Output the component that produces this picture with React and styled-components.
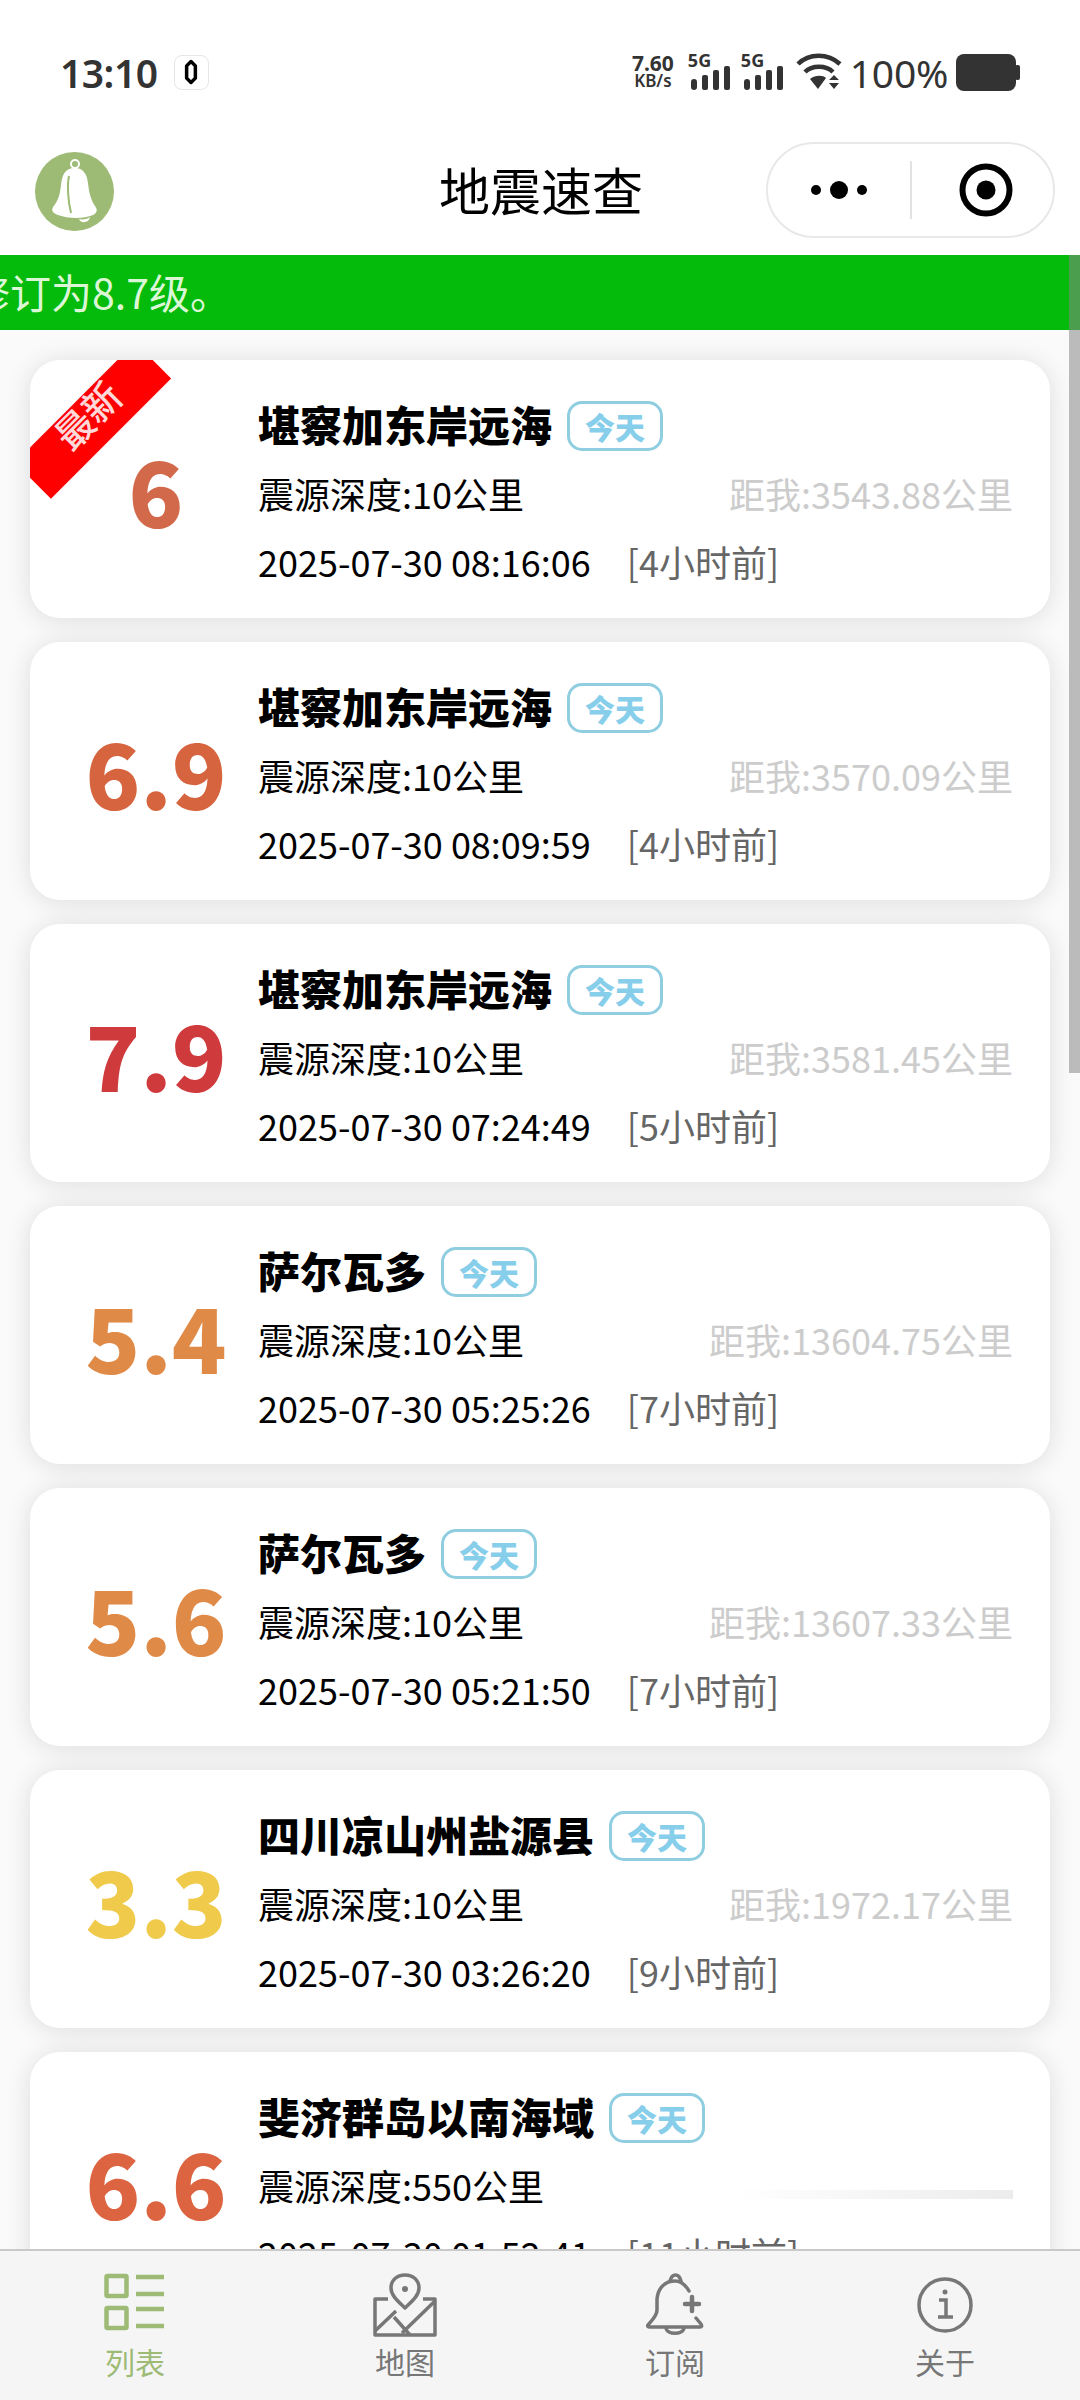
import React from 'react'
import styled, { createGlobalStyle } from 'styled-components'

const GlobalStyle = createGlobalStyle`
  html, body {
    margin: 0;
    padding: 0;
    background: #fff;
    font-family: "Noto Sans CJK SC", "Noto Sans", sans-serif;
  }
`

const quakes = [
  { mag: '6', color: '#d2694a', place: '堪察加东岸远海', depth: '10', dist: '3543.88', time: '2025-07-30 08:16:06', ago: '4', latest: true },
  { mag: '6.9', color: '#d6653f', place: '堪察加东岸远海', depth: '10', dist: '3570.09', time: '2025-07-30 08:09:59', ago: '4' },
  { mag: '7.9', color: '#cf3a3c', place: '堪察加东岸远海', depth: '10', dist: '3581.45', time: '2025-07-30 07:24:49', ago: '5' },
  { mag: '5.4', color: '#e08a48', place: '萨尔瓦多', depth: '10', dist: '13604.75', time: '2025-07-30 05:25:26', ago: '7' },
  { mag: '5.6', color: '#e08a48', place: '萨尔瓦多', depth: '10', dist: '13607.33', time: '2025-07-30 05:21:50', ago: '7' },
  { mag: '3.3', color: '#f0ca4b', place: '四川凉山州盐源县', depth: '10', dist: '1972.17', time: '2025-07-30 03:26:20', ago: '9' },
  { mag: '6.6', color: '#dc6440', place: '斐济群岛以南海域', depth: '550', time: '2025-07-30 01:52:41', ago: '11', fading: true },
]

const tabs = [
  { label: '列表', Icon: ListIcon, active: true },
  { label: '地图', Icon: MapIcon },
  { label: '订阅', Icon: BellPlusIcon },
  { label: '关于', Icon: InfoIcon },
]

const Page = styled.div`
  position: relative;
  width: 1080px;
  height: 2400px;
  display: flex;
  flex-direction: column;
  overflow: hidden;
  background: #fff;
`

const StatusBar = styled.div`
  height: 130px;
  flex: none;
  padding: 14px 60px 0 60px;
  box-sizing: border-box;
  display: flex;
  align-items: center;
  justify-content: space-between;
  color: #333;
`

const StatusLeft = styled.div`
  display: flex;
  align-items: center;
  gap: 16px;
`

const Clock = styled.span`
  font-family: "Noto Sans", sans-serif;
  font-size: 39px;
  font-weight: 600;
  letter-spacing: -0.5px;
`

const CapsuleBadge = styled.span`
  width: 35px;
  height: 35px;
  box-sizing: border-box;
  border: 1px solid #e6e6e6;
  border-radius: 8px;
  display: flex;
  align-items: center;
  justify-content: center;
`

const StatusRight = styled.div`
  display: flex;
  align-items: center;
`

const Speed = styled.div`
  width: 46px;
  margin-right: 14px;
  font-family: "Noto Sans", sans-serif;
  font-weight: 700;
  font-size: 21px;
  line-height: 18px;
  text-align: center;
  small {
    display: block;
    font-size: 17px;
    font-weight: 600;
  }
`

const Signal = styled.div`
  position: relative;
  width: 42px;
  height: 36px;
  margin-right: 11px;
  span {
    position: absolute;
    left: -2px;
    top: -3px;
    font-family: "Noto Sans", sans-serif;
    font-size: 18px;
    font-weight: 700;
    line-height: 18px;
  }
  svg {
    display: block;
  }
`

const Percent = styled.span`
  font-family: "Noto Sans", sans-serif;
  font-size: 39px;
  margin: 0 8px 0 8px;
  letter-spacing: -0.3px;
`

const NavBar = styled.div`
  height: 125px;
  flex: none;
  box-sizing: border-box;
  display: grid;
  grid-template-columns: 1fr auto 1fr;
  align-items: center;
  padding: 0 25px 5px 35px;
`

const Logo = styled.div`
  width: 79px;
  height: 79px;
  margin-top: 3px;
  border-radius: 50%;
  background: #9dbb75;
  display: flex;
  align-items: center;
  justify-content: center;
`

const NavTitle = styled.div`
  font-size: 51px;
  font-weight: 400;
  color: #000;
  margin: -2px 0 0 -8px;
`

const Capsule = styled.div`
  justify-self: end;
  width: 289px;
  height: 96px;
  box-sizing: border-box;
  border: 2px solid #e8e8e8;
  border-radius: 48px;
  display: grid;
  grid-template-columns: 1fr 2px 1fr;
  align-items: center;
`

const CapsuleSide = styled.div`
  height: 100%;
  box-sizing: border-box;
  padding-left: ${p => p.$inset || 0}px;
  display: flex;
  align-items: center;
  justify-content: center;
`

const CapsuleDivider = styled.div`
  height: 58px;
  background: #e2e2e2;
`

const Banner = styled.div`
  height: 75px;
  flex: none;
  background: #04ba0b;
  color: #dcf7d6;
  font-size: 41px;
  line-height: 72px;
  white-space: nowrap;
  overflow: hidden;
`

const BannerText = styled.span`
  display: inline-block;
  margin-left: -31px;
`

const List = styled.div`
  flex: 1;
  min-height: 0;
  overflow: hidden;
  background: #fafafa;
  padding: 30px 30px 0;
  display: flex;
  flex-direction: column;
  gap: 24px;
`

const Card = styled.div`
  position: relative;
  flex: none;
  height: 258px;
  background: #fff;
  border-radius: 30px;
  box-shadow: 0 2px 26px rgba(0, 0, 0, 0.12);
  overflow: hidden;
  display: flex;
`

const Ribbon = styled.div`
  position: absolute;
  left: -22px;
  top: 35px;
  width: 170px;
  height: 51px;
  background: #fe0000;
  color: #ffd9d9;
  font-size: 38px;
  font-weight: 500;
  line-height: 33px;
  text-align: center;
  transform: rotate(-45deg);
`

const Magnitude = styled.div`
  width: 192px;
  padding: 0 0 0 30px;
  flex: none;
  display: flex;
  align-items: center;
  justify-content: center;
  color: ${p => p.$color};
  font-size: 90px;
  font-weight: 900;
`

const Body = styled.div`
  flex: 1;
  min-width: 0;
  padding: 31px 37px 0 6px;
`

const Row = styled.div`
  height: 68px;
  display: flex;
  align-items: center;
  justify-content: ${p => (p.$spread ? 'space-between' : 'flex-start')};
  font-size: 36px;
  color: #000;
  white-space: nowrap;
`

const Place = styled.span`
  font-size: 42px;
  font-weight: 900;
  margin-top: -3px;
`

const TodayTag = styled.span`
  width: 96px;
  height: 50px;
  margin: 2px 0 0 15px;
  box-sizing: border-box;
  border: 3px solid #8fcde0;
  border-radius: 15px;
  color: #87ceeb;
  font-size: 30px;
  font-weight: 900;
  line-height: 44px;
  text-align: center;
`

const Distance = styled.span`
  color: #ccc;
`

const FadeStreak = styled.span`
  width: 280px;
  height: 9px;
  margin-top: 19px;
  background: linear-gradient(to right, #fff, #ececec);
`

const Ago = styled.span`
  margin-left: 36px;
  color: #666;
`

const Scrollbar = styled.div`
  position: absolute;
  right: 0;
  top: 255px;
  width: 11px;
  height: 818px;
  background: rgba(135, 135, 135, 0.55);
`

const TabBar = styled.div`
  position: relative;
  z-index: 1;
  height: 151px;
  flex: none;
  box-sizing: border-box;
  border-top: 2px solid #c9c9c9;
  background: #f5f5f5;
  display: grid;
  grid-template-columns: repeat(4, 1fr);
`

const Tab = styled.div`
  display: flex;
  flex-direction: column;
  align-items: center;
  padding-top: 22px;
  color: ${p => (p.$active ? '#9dbb75' : '#777')};
`

const TabIcon = styled.div`
  height: 66px;
  svg {
    display: block;
  }
`

const TabLabel = styled.span`
  font-size: 30px;
  line-height: 44px;
`

function BadgeIcon() {
  return (
    <svg width="14" height="26" viewBox="0 0 16 28">
      <path d="M8 2 L13 7 V21 L8 26 L3 21 V7 Z" fill="none" stroke="#000" strokeWidth="4" strokeLinejoin="round" />
    </svg>
  )
}

function SignalIcon() {
  return (
    <svg width="42" height="36" viewBox="0 0 42 36" fill="currentColor">
      <rect x="1" y="25" width="6" height="11" rx="3" />
      <rect x="12" y="21" width="6" height="15" rx="2" />
      <rect x="23" y="16" width="6" height="20" rx="2" />
      <rect x="34" y="12" width="6" height="24" rx="2" />
    </svg>
  )
}

function WifiIcon() {
  return (
    <svg width="46" height="38" viewBox="0 0 46 38" fill="none" stroke="currentColor" strokeWidth="4.5">
      <path d="M2 11 C13 0 32 0 44 11" />
      <path d="M9 19 C16 12 30 12 37 19" />
      <path d="M14 26 C19 22 27 22 30 25 L22 36 Z" fill="currentColor" stroke="none" />
      <path d="M38 22 L43 27 H33 Z M33 30 H43 L38 36 Z" fill="currentColor" stroke="none" />
    </svg>
  )
}

function BatteryIcon() {
  return (
    <svg width="64" height="37" viewBox="0 0 64 37" fill="currentColor">
      <rect x="0" y="0" width="60" height="37" rx="8" />
      <rect x="59" y="11" width="5" height="15" rx="2" />
    </svg>
  )
}

function LogoBell() {
  return (
    <svg width="50" height="70" viewBox="0 0 50 70" fill="#fff">
      <circle cx="25" cy="7" r="4" fill="none" stroke="#fff" strokeWidth="2" />
      <path d="M25 11 C15 11 12 18 11 28 C10 38 8 44 3 50 C1 54 3 56 8 58 C19 62 34 62 43 58 C47 56 48 53 45 49 C41 43 39 36 38 26 C37 17 33 11 25 11 Z" />
      <path d="M19 19 C17 28 18 44 21 56" fill="none" stroke="#9dbb75" strokeWidth="2" />
      <path d="M29 62 C33 63 38 62 40 60 C39 66 31 67 29 62 Z" />
    </svg>
  )
}

function DotsIcon() {
  return (
    <svg width="58" height="20" viewBox="0 0 58 20" fill="#000">
      <circle cx="6" cy="10" r="5" />
      <circle cx="29" cy="10" r="9" />
      <circle cx="52" cy="10" r="5" />
    </svg>
  )
}

function TargetIcon() {
  return (
    <svg width="54" height="54" viewBox="0 0 54 54">
      <circle cx="27" cy="27" r="23.5" fill="none" stroke="#000" strokeWidth="6" />
      <circle cx="27" cy="27" r="9.5" fill="#000" />
    </svg>
  )
}

function ListIcon() {
  return (
    <svg width="62" height="58" viewBox="0 0 62 58" fill="none" stroke="currentColor" strokeWidth="4.5">
      <rect x="2.5" y="3" width="20" height="20" rx="1" />
      <rect x="2.5" y="35" width="20" height="20" rx="1" />
      <path d="M32 4 H60 M32 21 H60 M32 36 H60 M32 53 H60" />
    </svg>
  )
}

function MapIcon() {
  return (
    <svg width="66" height="64" viewBox="0 0 66 64" fill="none" stroke="currentColor" strokeWidth="3.5" strokeLinejoin="round">
      <path d="M33 35 C27 29 19 23 19 15 C19 7 25 2 33 2 C41 2 47 7 47 15 C47 23 39 29 33 35 Z" />
      <circle cx="33" cy="16" r="3" fill="currentColor" stroke="none" />
      <path d="M16 26 H3 V62 H63 V26 H51" />
      <path d="M3 58 L24 38 M63 28 L30 60 M22 44 L38 62" />
    </svg>
  )
}

function BellPlusIcon() {
  return (
    <svg width="58" height="62" viewBox="0 0 58 62" fill="none" stroke="currentColor" strokeWidth="3.5" strokeLinecap="round" strokeLinejoin="round">
      <path d="M24 8 C26 0 33 0 35 8" />
      <path d="M43 18 C39 11 34 8 29 8 C19 8 12 15 11 26 L11 37 C11 43 6 47 2 52 C1 53 2 54 3 54 H54 C56 54 56 53 55 51 L50 45" />
      <path d="M20 55 C21 62 37 62 38 55" />
      <path d="M46 24 V38 M39 31 H53" strokeWidth="4.5" />
    </svg>
  )
}

function InfoIcon() {
  return (
    <svg width="56" height="62" viewBox="0 0 56 62" fill="none" stroke="currentColor" strokeWidth="3.5">
      <circle cx="28" cy="32" r="26" />
      <circle cx="28" cy="19" r="2.5" fill="currentColor" stroke="none" />
      <path d="M22 27 H29 V44 M21 44 H36" />
    </svg>
  )
}

function QuakeCard({ quake }) {
  return (
    <Card>
      {quake.latest && <Ribbon>最新</Ribbon>}
      <Magnitude $color={quake.color}>{quake.mag}</Magnitude>
      <Body>
        <Row>
          <Place>{quake.place}</Place>
          <TodayTag>今天</TodayTag>
        </Row>
        <Row $spread>
          <span>震源深度:{quake.depth}公里</span>
          {quake.fading ? <FadeStreak /> : <Distance>距我:{quake.dist}公里</Distance>}
        </Row>
        <Row>
          <span>{quake.time}</span>
          <Ago>[{quake.ago}小时前]</Ago>
        </Row>
      </Body>
    </Card>
  )
}

export default function App() {
  return (
    <Page>
      <GlobalStyle />
      <StatusBar>
        <StatusLeft>
          <Clock>13:10</Clock>
          <CapsuleBadge><BadgeIcon /></CapsuleBadge>
        </StatusLeft>
        <StatusRight>
          <Speed>7.60<small>KB/s</small></Speed>
          <Signal><span>5G</span><SignalIcon /></Signal>
          <Signal><span>5G</span><SignalIcon /></Signal>
          <WifiIcon />
          <Percent>100%</Percent>
          <BatteryIcon />
        </StatusRight>
      </StatusBar>
      <NavBar>
        <Logo><LogoBell /></Logo>
        <NavTitle>地震速查</NavTitle>
        <Capsule>
          <CapsuleSide><DotsIcon /></CapsuleSide>
          <CapsuleDivider />
          <CapsuleSide $inset={7}><TargetIcon /></CapsuleSide>
        </Capsule>
      </NavBar>
      <Banner><BannerText>修订为8.7级。</BannerText></Banner>
      <List>
        {quakes.map(q => <QuakeCard key={q.time} quake={q} />)}
      </List>
      <TabBar>
        {tabs.map(({ label, Icon, active }) => (
          <Tab key={label} $active={active}>
            <TabIcon><Icon /></TabIcon>
            <TabLabel>{label}</TabLabel>
          </Tab>
        ))}
      </TabBar>
      <Scrollbar />
    </Page>
  )
}
